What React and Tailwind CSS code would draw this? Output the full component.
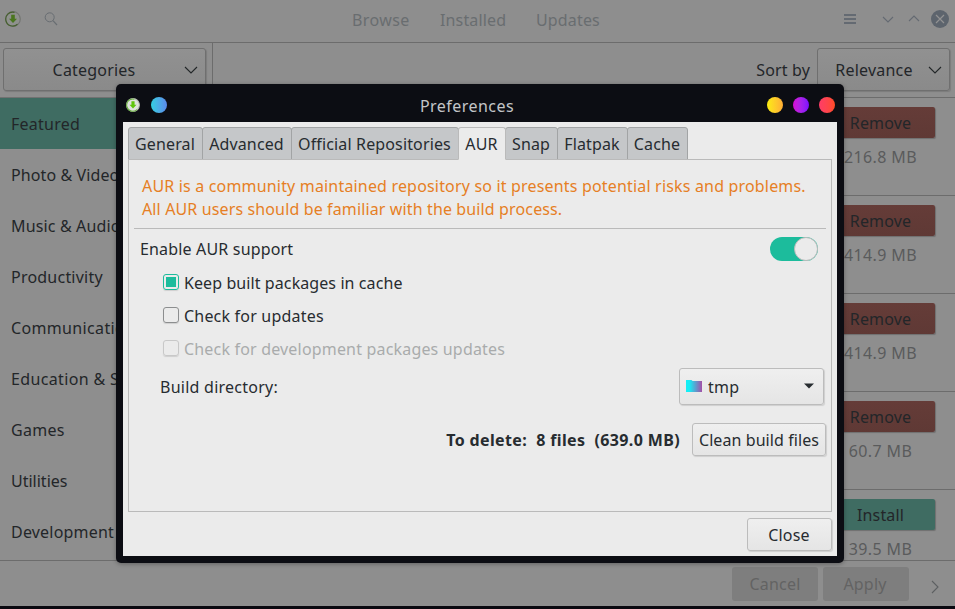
import React from "react";
import clsx from "clsx";

const categories = [
  { name: "Featured", tracking: "tracking-[0.25px]" },
  { name: "Photo & Video", tracking: "tracking-[0.1px]" },
  { name: "Music & Audio", tracking: "tracking-[0.15px]" },
  { name: "Productivity", tracking: "tracking-[0.22px]" },
  { name: "Communication", tracking: "tracking-[0.35px]" },
  { name: "Education & Science", tracking: "tracking-[0.35px]" },
  { name: "Games", tracking: "tracking-[0.3px]" },
  { name: "Utilities", tracking: "tracking-normal" },
  { name: "Development", tracking: "tracking-[0.2px]" },
];

const packages = [
  { action: "Remove", size: "216.8 MB" },
  { action: "Remove", size: "414.9 MB" },
  { action: "Remove", size: "414.9 MB" },
  { action: "Remove", size: "60.7 MB" },
  { action: "Install", size: "39.5 MB" },
];

const tabs = [
  { name: "General", width: "w-[75px]" },
  { name: "Advanced", width: "w-[90px]" },
  { name: "Official Repositories", width: "w-[168px]" },
  { name: "AUR", width: "w-[48px]" },
  { name: "Snap", width: "w-[53px]" },
  { name: "Flatpak", width: "w-[71px]" },
  { name: "Cache", width: "w-[61px]" },
];

function AppIcon({ className, dim }) {
  return (
    <svg viewBox="0 0 16 16" className={className}>
      <circle cx="8" cy="8" r="7.3" fill={dim ? "#8f918e" : "#dfe3dc"} stroke={dim ? "#747672" : "#b9beb5"} strokeWidth="1.2" />
      <path d="M12.5 13.2A7 7 0 1 1 9.5 1.3" fill="none" stroke={dim ? "#46602f" : "#69b13d"} strokeWidth="1.2" />
      <path d="M6.2 3.8h3.600v4h2.200L8 12 4 7.800h2.200z" fill={dim ? "#4a761f" : "#5fc40c"} />
    </svg>
  );
}

function Chevron({ d, className }) {
  return (
    <svg viewBox="0 0 14 8" className={clsx("h-2 w-3.5 shrink-0 fill-none", className)}>
      <path d={d} strokeWidth="1.1" />
    </svg>
  );
}

function GrayCombo({ label, className }) {
  return (
    <div className={clsx("flex h-[43px] items-center rounded-[3px] border border-[#6f6f6f] bg-gradient-to-b from-[#919191] to-[#8a8a8a] tracking-[0.2px] shadow-[1px_1px_1px_#7c7c7c]", className)}>
      <span className="flex-1 text-center">{label}</span>
      <Chevron d="M1 1l6 6 6-6" className="stroke-[#222628]" />
    </div>
  );
}

function PushButton({ children, className }) {
  return (
    <button className={clsx("flex items-center justify-center rounded-[3px] border border-[#bcbcbc] bg-gradient-to-b from-[#efefef] to-[#e5e5e5] shadow-[1px_1px_1px_#cfcfcf]", className)}>
      {children}
    </button>
  );
}

function CheckRow({ label, checked, disabled, tracking }) {
  return (
    <label className={clsx("flex h-[33px] items-center gap-[5px]", tracking, disabled && "text-[#a9abac]")}>
      <span
        className={clsx(
          "mb-[2px] flex size-4 items-center justify-center rounded-[3px] border shadow-[0_1px_1px_#cfcfcf]",
          checked ? "border-[#1cbc9c]" : disabled ? "border-[#c8c8c8]" : "border-[#8c8e8f]"
        )}
      >
        {checked && <span className="size-[10px] bg-[#1cbc9c]" />}
      </span>
      <span>{label}</span>
    </label>
  );
}

function MainWindow() {
  return (
    <div className="flex h-[609px] w-[955px] flex-col border-b-[3px] border-[#0a0910] bg-[#8e8e8e]">
      <header className="flex h-[43px] shrink-0 items-center border-b border-[#6c6c6c] pb-[4px] text-[#696d70]">
        <AppIcon dim className="ml-[5px] size-4" />
        <svg viewBox="0 0 14 14" className="ml-[23px] size-3.5 fill-none stroke-[#686d72]">
          <circle cx="5.700" cy="5.300" r="4.500" />
          <path d="M9 8.700l4 4.300" strokeWidth="1.200" />
        </svg>
        <nav className="ml-[294px] flex gap-[30px] pt-[2px]">
          <span className="w-[58px] tracking-[0.4px]">Browse</span>
          <span className="w-[66px] tracking-[0.15px]">Installed</span>
          <span className="tracking-[0.15px]">Updates</span>
        </nav>
        <div className="ml-auto flex items-center">
          <div className="mr-[25px] flex w-3 flex-col gap-[2px]">
            <span className="h-[2px] bg-[#646a72]" />
            <span className="h-[2px] bg-[#646a72]" />
            <span className="h-[2px] bg-[#646a72]" />
          </div>
          <Chevron d="M2 2l5 5 5-5" className="mr-[12px] stroke-[#646a72]" />
          <Chevron d="M2 6l5-5 5 5" className="mr-[10px] stroke-[#646a72]" />
          <svg viewBox="0 0 18 18" className="mr-[6px] size-[18px]">
            <circle cx="9" cy="9" r="9" fill="#5d646d" />
            <path d="M5 5l8 8M13 5l-8 8" stroke="#929292" strokeWidth="1.200" />
          </svg>
        </div>
      </header>

      <div className="flex h-[518px] shrink-0 border-b border-[#6c6c6c]">
        <aside className="flex w-[213px] shrink-0 flex-col border-r border-[#6c6c6c]">
          <div className="h-[55px] shrink-0 border-b border-[#727272] pt-[5px] pl-[3px]">
            <GrayCombo label="Categories" className="w-[203px] pr-[7px]" />
          </div>
          {categories.map((category, i) => (
            <div
              key={category.name}
              className={clsx("flex h-[51px] items-center overflow-hidden pl-[11px] whitespace-nowrap", category.tracking, i === 0 && "bg-[#3f6c62]")}
            >
              {category.name}
            </div>
          ))}
        </aside>

        <main className="flex flex-1 flex-col">
          <div className="flex h-[55px] shrink-0 items-start justify-end border-b border-[#6c6c6c] pt-[5px] pr-[5px]">
            <span className="mr-[7px] pt-px leading-[43px] tracking-[0.15px]">Sort by</span>
            <GrayCombo label="Relevance" className="w-[133px] pr-[7px] pl-[2px]" />
          </div>
          {packages.map((pkg, i) => (
            <div
              key={i}
              className={clsx("flex shrink-0 flex-col items-end pt-[9px] pr-[20px]", i < 4 ? "h-[98px] border-b border-[#6c6c6c]" : "h-[70px]")}
            >
              <div
                className={clsx(
                  "flex h-[31px] w-[109px] items-center justify-center rounded-[2px] tracking-[0.15px] shadow-[1px_1px_1px_#6f6f6f]",
                  pkg.action === "Remove" ? "bg-gradient-to-b from-[#653c38] to-[#5f3935]" : "bg-[#3f6c62]"
                )}
              >
                {pkg.action}
              </div>
              <div className="mt-[8px] w-[109px] text-center tracking-[0.4px] text-[#5a5b5c]">{pkg.size}</div>
            </div>
          ))}
        </main>
      </div>

      <footer className="flex flex-1 items-center justify-end gap-[5px] pt-px tracking-[0.2px] text-[#636363]">
        <div className="flex h-[34px] w-[86px] items-center justify-center rounded-[3px] bg-[#7e7e7e]">Cancel</div>
        <div className="flex h-[34px] w-[86px] items-center justify-center rounded-[3px] bg-[#7e7e7e] pr-[2px]">Apply</div>
        <svg viewBox="0 0 8 14" className="mt-[6px] mr-[16px] ml-[17px] h-3.5 w-2 fill-none stroke-[#5d6062]">
          <path d="M1 1l6 6-6 6" strokeWidth="1.100" />
        </svg>
      </footer>
    </div>
  );
}

function PreferencesDialog() {
  return (
    <div className="absolute top-[84px] left-[116px] flex h-[479px] w-[728px] flex-col rounded-[5px] bg-[#0c0d13] px-[7px] pb-[7px] text-[#272c30] shadow-[0_1px_4px_#00000050]">
      <div className="flex h-[38px] shrink-0 items-center pt-[4px]">
        <AppIcon className="ml-[3px] size-3.5" />
        <span className="ml-[11px] size-4 rounded-full bg-gradient-to-r from-[#30cfe0] to-[#5a88ea]" />
        <span className="flex-1 pt-[2px] text-center tracking-[0.45px] text-[#c3c5c8]">Preferences</span>
        <div className="mr-[2px] flex gap-[10px]">
          <span className="size-4 rounded-full bg-gradient-to-r from-[#fbec0d] to-[#ffac34]" />
          <span className="size-4 rounded-full bg-gradient-to-r from-[#d708d4] to-[#7d0aff]" />
          <span className="size-4 rounded-full bg-gradient-to-r from-[#ff3c68] to-[#ff4b23]" />
        </div>
      </div>

      <div className="flex flex-1 flex-col bg-[#ebebeb] px-[5px] pt-[5px]">
        <div className="flex h-[33px] shrink-0">
          {tabs.map((tab) => (
            <div
              key={tab.name}
              className={clsx(
                "-mr-px flex items-center justify-center rounded-t-[3px] border pr-px tracking-[0.14px] whitespace-nowrap",
                tab.width,
                tab.name === "AUR" ? "z-10 border-[#bababa] border-b-[#ebebeb] bg-[#ebebeb]" : "border-[#a2a4a5] bg-[#c5c7c9]"
              )}
            >
              {tab.name}
            </div>
          ))}
        </div>

        <div className="-mt-px flex h-[353px] shrink-0 flex-col border border-[#bababa] px-[5px] pt-[15px]">
          <p className="border-b border-[#bababa] pb-[7px] pl-[8px] leading-[23px] whitespace-nowrap text-[#e67f25]">
            <span className="tracking-[0.177px]">AUR is a community maintained repository so it presents potential risks and problems.</span>
            <br />
            <span className="tracking-[0.13px]">All AUR users should be familiar with the build process.</span>
          </p>
          <div className="flex h-[39px] items-center justify-between pr-[8px] pl-[6px]">
            <span className="tracking-[0.17px]">Enable AUR support</span>
            <span className="flex h-6 w-12 justify-end rounded-full bg-[#1cbc9c]">
              <span className="size-6 rounded-full border border-[#bababa] bg-[#ebebeb]" />
            </span>
          </div>
          <div className="-mt-[2px] flex flex-col pl-[29px]">
            <CheckRow label="Keep built packages in cache" tracking="tracking-[0.09px]" checked />
            <CheckRow label="Check for updates" tracking="tracking-[0.2px]" />
            <CheckRow label="Check for development packages updates" tracking="tracking-[0.18px]" disabled />
          </div>
          <div className="mt-[2px] flex h-[38px] items-center justify-between pr-[2px] pl-[26px]">
            <span className="pt-px tracking-[0.25px]">Build directory:</span>
            <PushButton className="h-[37px] w-[145px] pr-[9px] pl-[6px]">
              <svg viewBox="0 0 16 12" className="h-3 w-4">
                <defs>
                  <linearGradient id="folder">
                    <stop offset="0.2" stopColor="#14eef5" />
                    <stop offset="1" stopColor="#a44fa8" />
                  </linearGradient>
                </defs>
                <path d="M0 0h5.500l1 1H16v11H0z" fill="url(#folder)" />
              </svg>
              <span className="ml-[6px] flex-1 pt-px text-left tracking-[0.2px]">tmp</span>
              <svg viewBox="0 0 10 6" className="h-1.5 w-2.5 fill-[#272c30]">
                <path d="M0 .5h10L5 5.500z" />
              </svg>
            </PushButton>
          </div>
          <div className="mt-[18px] flex items-center justify-end">
            <span className="mr-[12px] font-bold tracking-[0.37px] whitespace-pre">To delete:  8 files  (639.0 MB)</span>
            <PushButton className="h-[33px] w-[134px] tracking-[0.08px] whitespace-nowrap">Clean build files</PushButton>
          </div>
        </div>

        <PushButton className="mt-[6px] h-[33px] w-[85px] self-end pr-px tracking-[0.2px]">Close</PushButton>
      </div>
    </div>
  );
}

export default function App() {
  return (
    <div className="relative h-[609px] w-[955px] overflow-hidden font-['Noto_Sans',sans-serif] text-[16px] leading-[22px] text-[#232629]">
      <MainWindow />
      <PreferencesDialog />
    </div>
  );
}
